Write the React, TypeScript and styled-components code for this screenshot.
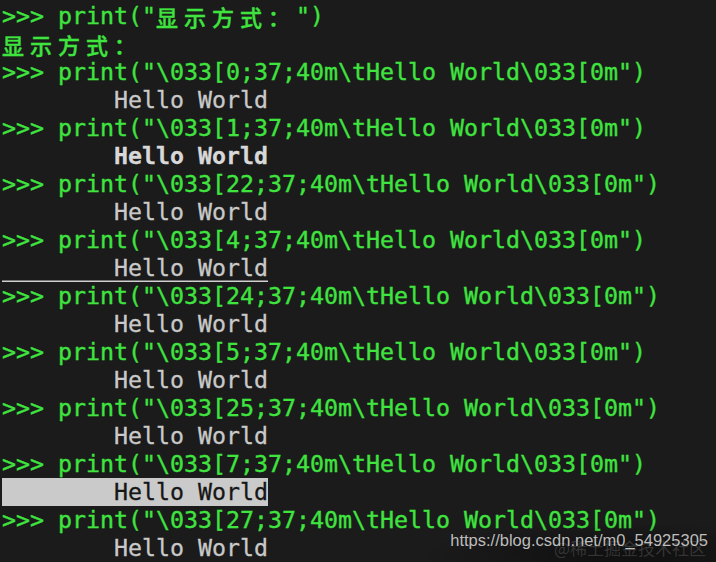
import React from 'react'
import styled, { createGlobalStyle } from 'styled-components'

const cellWidth = 14
const rowHeight = 28

const GlobalStyle = createGlobalStyle`
  html, body {
    margin: 0;
    padding: 0;
    background: #1b1b1b;
  }
`

const Terminal = styled.div`
  position: relative;
  width: 716px;
  height: 562px;
  overflow: hidden;
  box-sizing: border-box;
  padding: 2px 0 0 2px;
  background: #1b1b1b;
  font-family: 'DejaVu Sans Mono', 'Liberation Mono', 'Noto Sans CJK SC', monospace;
  font-size: 23.25px;
`

const Row = styled.div`
  height: ${rowHeight}px;
  line-height: ${rowHeight}px;
  white-space: pre;
`

const Prompt = styled.span`
  color: #3fe43f;
  -webkit-text-stroke: 0.35px #3fe43f;
`

type OutputMode = 'normal' | 'bold' | 'underline' | 'inverse'

const Output = styled.span<{ $mode: OutputMode }>`
  display: inline-block;
  height: ${rowHeight}px;
  color: ${({ $mode }) => ($mode === 'inverse' ? '#161616' : $mode === 'bold' ? '#d8d8d8' : '#c9c9c9')};
  background: ${({ $mode }) => ($mode === 'inverse' ? '#cacaca' : 'transparent')};
  font-weight: ${({ $mode }) => ($mode === 'bold' ? 700 : 400)};
  -webkit-text-stroke: 0.3px currentColor;
  box-shadow: ${({ $mode }) => ($mode === 'underline' ? 'inset 0 -1.5px 0 #d0d0d0' : 'none')};
`

const Wide = styled.span`
  display: inline-block;
  width: ${cellWidth * 2}px;
  font-family: 'Noto Sans CJK SC', sans-serif;
  font-size: 22px;
  font-weight: 500;
  text-align: left;
  vertical-align: top;
`

const Watermark = styled.div`
  position: absolute;
  right: 8px;
  bottom: 12px;
  font-family: 'Liberation Sans', Arial, sans-serif;
  font-size: 16.5px;
  color: rgba(220, 220, 220, 0.85);
  white-space: nowrap;
`

const WatermarkShade = styled.div`
  position: absolute;
  right: 0;
  bottom: 0;
  width: 300px;
  height: 40px;
  background: radial-gradient(ellipse at 70% 80%, rgba(0, 0, 0, 0.45), rgba(0, 0, 0, 0) 70%);
`

const Ghost = styled.div`
  position: absolute;
  right: 10px;
  bottom: 2px;
  font-family: 'Noto Sans CJK SC', sans-serif;
  font-size: 17px;
  color: rgba(200, 200, 200, 0.2);
  white-space: nowrap;
`

const isWide = (ch: string) => /[\u3000-\u9fff\uff00-\uffef]/.test(ch)

const renderText = (text: string) => {
  const parts: React.ReactNode[] = []
  let buf = ''
  Array.from(text).forEach((ch, i) => {
    if (isWide(ch)) {
      if (buf) parts.push(buf)
      buf = ''
      parts.push(<Wide key={i}>{ch}</Wide>)
    } else {
      buf += ch
    }
  })
  if (buf) parts.push(buf)
  return parts
}

const codes: { code: string; mode: OutputMode }[] = [
  { code: '0', mode: 'normal' },
  { code: '1', mode: 'bold' },
  { code: '22', mode: 'normal' },
  { code: '4', mode: 'underline' },
  { code: '24', mode: 'normal' },
  { code: '5', mode: 'normal' },
  { code: '25', mode: 'normal' },
  { code: '7', mode: 'inverse' },
  { code: '27', mode: 'normal' },
]

const App: React.FC = () => {
  return (
    <Terminal>
      <GlobalStyle />
      <Row>
        <Prompt>{renderText('>>> print("显示方式：")')}</Prompt>
      </Row>
      <Row>
        <Prompt>{renderText('显示方式：')}</Prompt>
      </Row>
      {codes.map(({ code, mode }) => (
        <React.Fragment key={code}>
          <Row>
            <Prompt>{`>>> print("\\033[${code};37;40m\\tHello World\\033[0m")`}</Prompt>
          </Row>
          <Row>
            <Output $mode={mode}>{'        Hello World'}</Output>
          </Row>
        </React.Fragment>
      ))}
      <WatermarkShade />
      <Ghost>@稀土掘金技术社区</Ghost>
      <Watermark>https://blog.csdn.net/m0_54925305</Watermark>
    </Terminal>
  )
}

export default App
